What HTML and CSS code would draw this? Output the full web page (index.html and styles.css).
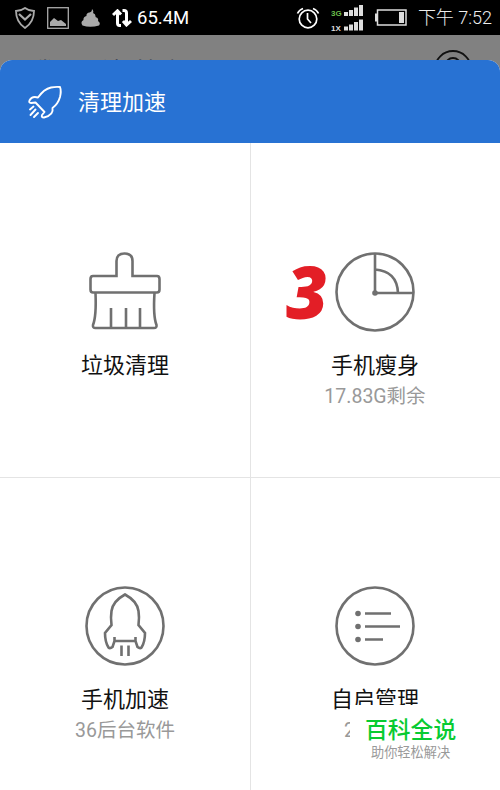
FILE: index.html
```html
<!DOCTYPE html>
<html lang="zh-CN">
<head>
  <meta charset="UTF-8" />
  <meta name="viewport" content="width=device-width, initial-scale=1.0"/>
  <title>清理加速</title>
  <link rel="stylesheet" href="styles.css">
</head>
<body>
  <div class="status-bar">
    <div class="status-left">
      <svg width="20" height="22" viewBox="0 0 20 22" fill="none" stroke="#aaa" stroke-width="1.8">
        <path d="M10 1 Q14 4 19 4 Q19 15 10 21 Q1 15 1 4 Q6 4 10 1Z"/>
        <path d="M4 7 L10 12.500 L16 7" stroke-width="2.200"/>
      </svg>
      <svg width="22" height="22" viewBox="0 0 22 22">
        <rect x=".7" y=".7" width="20.600" height="20.600" fill="none" stroke="#aaa" stroke-width="1.300"/>
        <path d="M3 19v-4l4-4 4 3 3-1 5 4v2z" fill="#aaa"/>
      </svg>
      <svg width="19" height="18" viewBox="0 0 19 18">
        <path d="M11 0 Q13 2 12 4 Q15 5 14.500 8 Q18 9 17 12 Q20 14 18 16.500 Q9 19 1.500 16.500 Q-1 13 2.500 11 Q2 8 5.500 7 Q5 4 8.500 3.500 Q11 3 11 0Z" fill="#aaa"/>
      </svg>
      <svg width="20" height="18" viewBox="0 0 20 18" fill="none" stroke="#fff" stroke-width="3">
        <path d="M9 16.500 H7.500 Q5.500 16.500 5.500 14 V3"/>
        <path d="M1 6 L5.500 1.800 L9 5.500"/>
        <path d="M10.500 1.500 H12 Q14.500 1.500 14.500 4 V15"/>
        <path d="M11 12 L14.500 16 L19 12"/>
      </svg>
      <span class="memory">65.4M</span>
    </div>
    <div class="status-right">
      <svg width="24" height="22" viewBox="0 0 24 22" fill="none" stroke="#fff" stroke-width="1.700">
        <circle cx="12" cy="12" r="8.800"/>
        <path d="M11.500 6 V12 L15 16 M1.500 6.500 Q3 3 7 1.500 M17 1.500 Q21 3 22.500 6.500"/>
      </svg>
      <svg class="signal" width="33" height="27" viewBox="0 0 33 27">
        <g fill="#ddd">
          <path d="M13 8h4v4h-4zM18 6h4v6h-4zM23 3.500h4V12h-4zM28 1h4v11h-4z"/>
          <path d="M13 22.500h4v4h-4zM18 20.500h4v6h-4zM23 18h4v8.500h-4zM28 15.500h4v11h-4z"/>
        </g>
        <text x="0" y="11.500" font-size="8" fill="#6abf4b">3G</text>
        <text x="0" y="26.500" font-size="8" fill="#ddd">1X</text>
      </svg>
      <svg width="32" height="17" viewBox="0 0 32 17">
        <rect x="2.500" y="1" width="28.500" height="15" fill="none" stroke="#ddd" stroke-width="1.500"/>
        <path d="M0 4.500h2v8H0zM24 3h5v11h-5z" fill="#ddd"/>
      </svg>
      <span class="clock">下午 7:52</span>
    </div>
  </div>

  <div class="behind">
    <span class="app-name">腾讯 手机管家</span>
    <svg width="38" height="38" viewBox="0 0 38 38" fill="none" stroke="#111" stroke-width="1.800">
      <circle cx="19" cy="19" r="18"/>
      <circle cx="19" cy="15.500" r="7.500"/>
    </svg>
  </div>

  <div class="sheet">
    <div class="sheet-header">
      <svg width="36" height="34" viewBox="0 0 36 34" fill="none" stroke="#fff" stroke-width="1.900" stroke-linejoin="round" stroke-linecap="round">
        <path d="M11 12.500 Q17 4 24 2.500 Q29 1.500 33 2 Q34.500 6 33 12 Q31 19 25.500 23 Q27 30 17 32.500 Q14 32.500 15 30 L17.500 27 L8.500 17.500 L4 18 Q1.500 18 2.500 15.500 Q5 10.500 11 12.500Z"/>
        <path d="M6.500 21.500 L3 24.500 M8.500 24.500 L3.500 30 M11 28 L7 32"/>
      </svg>
      <span class="sheet-title">清理加速</span>
    </div>

    <div class="grid">
      <div class="cell">
        <svg class="icon" viewBox="0 0 80 80">
          <path d="M31.500 24 V9 Q31.500 1.500 39.500 1.500 Q47.500 1.500 47.500 9 V24 H72 Q74.500 24 74.500 27 V37.500 Q74.500 40.500 72 40.500 H8 Q5.500 40.500 5.500 37.500 V27 Q5.500 24 8 24Z"/>
          <path d="M10.500 41 Q11.500 64 8 73 Q7.500 76 10.500 76 H69 Q72 76 71.500 73 Q68 64 69.500 41 M26 56 V76 M41 56 V76 M55 56 V76"/>
        </svg>
        <div class="label">垃圾清理</div>
      </div>

      <div class="cell">
        <span class="step">3</span>
        <svg class="icon" viewBox="0 0 80 80">
          <circle cx="40" cy="40" r="38.500"/>
          <path d="M40 1.500 V41 H78.500 M40 17.500 Q62 19 63 41"/>
          <circle class="dot" cx="40" cy="41" r="2.800"/>
        </svg>
        <div class="label">手机瘦身</div>
        <div class="sub">17.83G剩余</div>
      </div>

      <div class="cell">
        <svg class="icon" viewBox="0 0 80 80">
          <circle cx="40" cy="40" r="38.500"/>
          <path d="M40 8.500 Q28 15 26.500 25 Q25.500 31 26.500 39 L20 47 Q20 56 23.500 61.500 Q25 63 27.500 61 L29.500 55 H50.500 L52.500 61 Q55 63 56.500 61.500 Q60 56 60 47 L53.500 39 Q54.500 31 53.500 25 Q52 15 40 8.500Z M29.500 55 V51 M50.500 55 V51"/>
          <path d="M36.500 59.500 V70 M43.500 59.500 V70"/>
        </svg>
        <div class="label">手机加速</div>
        <div class="sub">36后台软件</div>
      </div>

      <div class="cell">
        <svg class="icon" viewBox="0 0 80 80">
          <circle cx="40" cy="40" r="38.500"/>
          <path d="M30 27.500 H56 M30 40.500 H65 M30 53.500 H48"/>
          <circle class="dot" cx="23" cy="27.500" r="2.800"/>
          <circle class="dot" cx="23" cy="40.500" r="2.800"/>
          <circle class="dot" cx="23" cy="53.500" r="2.800"/>
        </svg>
        <div class="label">自启管理</div>
        <div class="sub sub-left">2</div>
        <div class="badge">
          <div class="badge-title">百科全说</div>
          <div class="badge-text">助你轻松解决</div>
        </div>
      </div>
    </div>
  </div>
</body>
</html>
```

FILE: styles.css
```css
* {
  box-sizing: border-box;
}

body {
  font-family: Roboto, 'Noto Sans CJK SC', sans-serif;
  background-color: #818181;
  margin: 0;
  height: 790px;
  overflow: hidden;
}

svg {
  display: block;
  flex: none;
}

/* Barra de estado */
.status-bar {
  display: flex;
  justify-content: space-between;
  height: 35px;
  padding: 0 8px 0 15px;
  background-color: #000;
  color: #fff;
}

.status-left, .status-right {
  display: flex;
  align-items: center;
  white-space: nowrap;
}

.status-left {
  gap: 12px;
}

.memory {
  margin-left: -7px;
  font-size: 18.5px;
}

.status-right {
  gap: 11px;
}

.signal {
  font-family: 'Liberation Sans', sans-serif;
  font-weight: bold;
}

.clock {
  margin-top: -3px;
  font-size: 18px;
  font-weight: 300;
  color: #eee;
}

/* Pantalla oscurecida detrás del panel */
.behind {
  display: flex;
  justify-content: space-between;
  height: 25px;
  padding: 15px 28px 0 29px;
  overflow: hidden;
}

.app-name {
  margin-top: 7px;
  font-size: 25px;
  line-height: 32px;
  color: #0b1a38;
  white-space: nowrap;
}

.sheet {
  background-color: #fff;
  border-radius: 12px 12px 0 0;
  overflow: hidden;
}

.sheet-header {
  display: flex;
  align-items: center;
  gap: 15px;
  height: 83px;
  padding-left: 27px;
  background-color: #2872d3;
  color: #fff;
  font-size: 22px;
}

.sheet-title {
  padding-bottom: 3px;
}

.grid {
  display: grid;
  grid-template-columns: 251px 249px;
  grid-template-rows: 335px 334px;
}

.cell {
  position: relative;
  display: flex;
  flex-direction: column;
  align-items: center;
  padding-top: 109px;
}

.cell:nth-child(odd) {
  border-right: 1px solid #e4e4e4;
}

.cell:nth-child(even) {
  padding-right: 1px;
}

.cell:nth-child(-n+2) {
  border-bottom: 1px solid #e4e4e4;
}

.cell:nth-child(n+3) {
  padding-top: 108px;
}

.icon {
  width: 80px;
  height: 80px;
  fill: none;
  stroke: #707070;
  stroke-width: 2.6;
}

.dot {
  fill: #707070;
  stroke: none;
}

.label {
  margin-top: 18px;
  font-size: 22px;
  line-height: 32px;
  color: #111;
}

.sub {
  font-size: 19.5px;
  line-height: 30px;
  color: #999;
}

.sub-left {
  align-self: flex-start;
  margin-left: 93px;
}

.step {
  position: absolute;
  left: 35px;
  top: 110px;
  font-family: 'Open Sans', sans-serif;
  font-size: 72px;
  font-weight: 800;
  font-style: italic;
  line-height: 76px;
  color: #e31e26;
}

.badge {
  position: absolute;
  left: 99px;
  top: 227px;
  width: 150px;
  height: 60px;
  padding: 10px 0 0 15px;
  background-color: #fff;
}

.badge-title {
  font-size: 22.8px;
  font-weight: 500;
  line-height: 32px;
  color: #08cb32;
}

.badge-text {
  margin-left: 6px;
  font-size: 13.2px;
  line-height: 12px;
  color: #999;
}
```
